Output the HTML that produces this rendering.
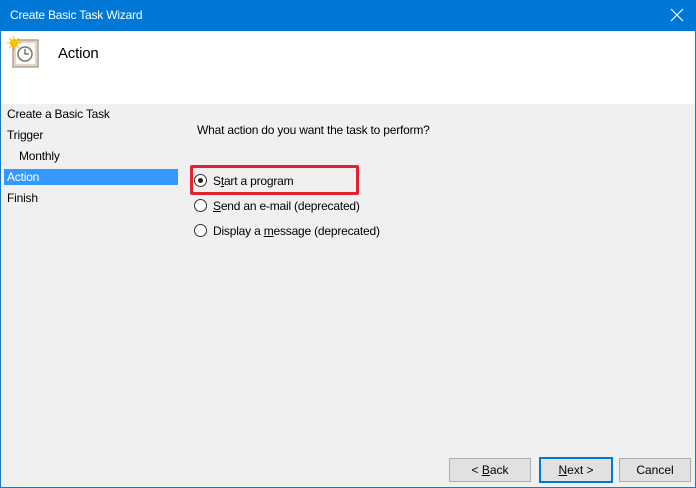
<!DOCTYPE html><html><head><style>
body{margin:0;width:696px;height:488px;position:relative;overflow:hidden;font-family:"Liberation Sans",sans-serif;font-size:12px;color:#000;background:#f0f0f0}
.a{position:absolute}
.t{white-space:nowrap;letter-spacing:-0.2px}
.btn{position:absolute;top:458px;height:22px;border:1px solid #adadad;background:#e1e1e1;text-align:center;line-height:22px;font-size:12px}
.r{position:absolute;width:11px;height:11px;border:1px solid #333;border-radius:50%;background:#fff}
</style></head><body>
<div class="a" style="left:0;top:0;width:696px;height:488px;box-sizing:border-box;border:1px solid #1979ca"></div>
<div class="a" style="left:0;top:0;width:696px;height:31px;background:#0078d7"></div>
<div class="a t" style="left:10px;top:8px;color:#fff;font-size:12px">Create Basic Task Wizard</div>
<svg class="a" style="left:670px;top:8px" width="14" height="14"><path d="M1 1L13 13M13 1L1 13" stroke="#fff" stroke-width="1.2"/></svg>
<div class="a" style="left:1px;top:31px;width:694px;height:73px;background:#fff"></div>
<svg class="a" style="left:6px;top:36px" width="34" height="34">
<rect x="7" y="4" width="25" height="27" fill="#f5efe4" stroke="#8a7660"/>
<rect x="9" y="6" width="21" height="23" fill="#fdfbf6" stroke="#c9b9a0"/>
<circle cx="19" cy="18" r="7" fill="#fff" stroke="#777" stroke-width="1.5"/>
<path d="M19 13V18H23" stroke="#333" fill="none"/>
<circle cx="8" cy="7" r="4" fill="#f7b500"/>
<path d="M8 0V14M1 7H15M3 2L13 12M13 2L3 12" stroke="#f7c600" stroke-width="1"/>
</svg>
<div class="a t" style="left:58px;top:45px;font-size:15px">Action</div>
<div class="a t" style="left:7px;top:107px">Create a Basic Task</div>
<div class="a t" style="left:7px;top:128px">Trigger</div>
<div class="a t" style="left:19px;top:149px">Monthly</div>
<div class="a" style="left:4px;top:169px;width:174px;height:16px;background:#3399ff"></div>
<div class="a t" style="left:7px;top:170px;color:#fff">Action</div>
<div class="a t" style="left:7px;top:191px">Finish</div>
<div class="a t" style="left:197px;top:123px">What action do you want the task to perform?</div>
<div class="a" style="left:190px;top:165px;width:163px;height:24px;border:3px solid #e3202b;border-radius:2px"></div>
<div class="r" style="left:194px;top:174px"></div><div class="a" style="left:198px;top:178px;width:5px;height:5px;border-radius:50%;background:#222"></div>
<div class="a t" style="left:213px;top:174px">S<u>t</u>art a program</div>
<div class="r" style="left:194px;top:199px"></div>
<div class="a t" style="left:213px;top:199px"><u>S</u>end an e-mail (deprecated)</div>
<div class="r" style="left:194px;top:224px"></div>
<div class="a t" style="left:213px;top:224px">Display a <u>m</u>essage (deprecated)</div>
<div class="btn" style="left:449px;width:80px">&lt; <u>B</u>ack</div>
<div class="btn" style="left:539px;width:70px;border:2px solid #0078d7;top:457px;line-height:22px"><u>N</u>ext &gt;</div>
<div class="btn" style="left:619px;width:70px">Cancel</div>
</body></html>
